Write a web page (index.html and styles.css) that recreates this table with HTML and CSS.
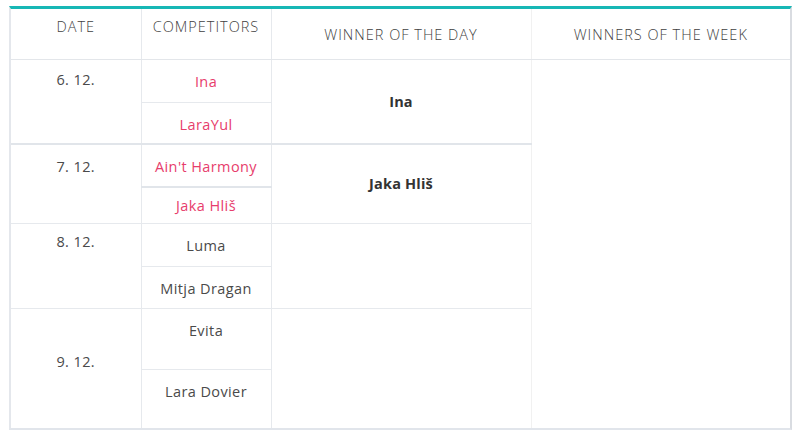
FILE: index.html
```html
<!DOCTYPE html>
<html lang="en">
<head>
  <meta charset="UTF-8" />
  <meta name="viewport" content="width=device-width, initial-scale=1.0" />
  <title>Schedule</title>
  <link rel="stylesheet" href="styles.css">
</head>
<body>
  <div class="schedule">
    <table class="schedule-table">
      <thead>
        <tr>
          <th class="col-date">DATE</th>
          <th class="col-comp">COMPETITORS</th>
          <th class="col-day low">WINNER OF THE DAY</th>
          <th class="col-week low">WINNERS OF THE WEEK</th>
        </tr>
      </thead>
      <tbody>
        <!-- 6. 12. -->
        <tr class="r1">
          <td class="date" rowspan="2">6. 12.</td>
          <td class="name pink">Ina</td>
          <td class="winner" rowspan="2">Ina</td>
          <td class="week" rowspan="8"></td>
        </tr>
        <tr class="r2">
          <td class="name pink">LaraYul</td>
        </tr>

        <!-- 7. 12. -->
        <tr class="r3">
          <td class="date late" rowspan="2">7. 12.</td>
          <td class="name pink">Ain't Harmony</td>
          <td class="winner" rowspan="2">Jaka Hliš</td>
        </tr>
        <tr class="r4">
          <td class="name pink tight">Jaka Hliš</td>
        </tr>

        <!-- 8. 12. -->
        <tr class="r5">
          <td class="date early" rowspan="2">8. 12.</td>
          <td class="name">Luma</td>
          <td class="winner" rowspan="2"></td>
        </tr>
        <tr class="r6">
          <td class="name">Mitja Dragan</td>
        </tr>

        <!-- 9. 12. -->
        <tr class="r7">
          <td class="date middle" rowspan="2">9. 12.</td>
          <td class="name">Evita</td>
          <td class="winner" rowspan="2"></td>
        </tr>
        <tr class="r8">
          <td class="name">Lara Dovier</td>
        </tr>
      </tbody>
    </table>
  </div>
</body>
</html>
```

FILE: styles.css
```css
*, *::before, *::after {
  box-sizing: border-box;
}

html, body {
  margin: 0;
  padding: 0;
  background: #ffffff;
}

body {
  font-family: "Open Sans", "Noto Sans", sans-serif;
  color: #555555;
  padding: 6px 8px 0 9px;
}

/* Card wrapper with teal top strip */
.schedule {
  width: 783px;
  border-top: 3px solid #17b7b5;
  border-left: 2px solid #e4e7ec;
  border-right: 2px solid #d9dce1;
  border-bottom: 2px solid #e1e5eb;
}

.schedule-table {
  width: 100%;
  border-collapse: collapse;
  table-layout: fixed;
  font-size: 14.5px;
  letter-spacing: 0.4px;
  text-align: center;
}

.col-date, .col-comp {
  width: 130px;
}

.col-day {
  width: 260px;
}

th {
  height: 50px;
  font-weight: 300;
  font-size: 14.5px;
  letter-spacing: 1px;
  color: #3f3f3f;
  vertical-align: top;
  padding: 8px 0 0;
  border-left: 1px solid #e6e9ed;
  border-bottom: 1px solid #e3e6ea;
}

th:first-child {
  border-left: none;
}

th.low {
  padding-top: 16px;
}

th.col-week {
  border-left-color: #f1f1f1;
}

td {
  padding: 0;
  border-left: 1px solid #e6e9ed;
  border-bottom: 1px solid #e6e9ed;
  font-weight: 400;
}

td.date {
  border-left: none;
  vertical-align: top;
  padding-top: 10px;
  color: #4a4a4a;
}

td.date.late {
  padding-top: 12px;
}

td.date.early {
  padding-top: 8px;
}

td.date.middle {
  padding-top: 43px;
}

td.name {
  vertical-align: top;
  padding-top: 11px;
  color: #4a4a4a;
  line-height: 22px;
}

td.name.tight {
  padding-top: 7px;
}

td.pink {
  color: #e73d6c;
}

td.winner {
  vertical-align: middle;
  font-weight: 700;
  letter-spacing: 0.2px;
  color: #333333;
}

td.week {
  border-left-color: #f1f1f1;
  border-bottom: none;
}

.r1 td { height: 43px; }
.r2 td { height: 42px; }
.r3 td { height: 43px; }
.r4 td { height: 36px; }
.r5 td { height: 43px; }
.r6 td { height: 42px; }
.r7 td { height: 61px; }
.r8 td { height: 59px; }

/* darker rule under the first two days */
.r2 td, .r1 td.date, .r1 td.winner {
  border-bottom: 2px solid #e1e5ea;
}

.r3 td.name {
  border-bottom: 2px solid #e1e5ea;
}

.r8 td, .r7 td.date, .r7 td.winner {
  border-bottom: none;
}
```
